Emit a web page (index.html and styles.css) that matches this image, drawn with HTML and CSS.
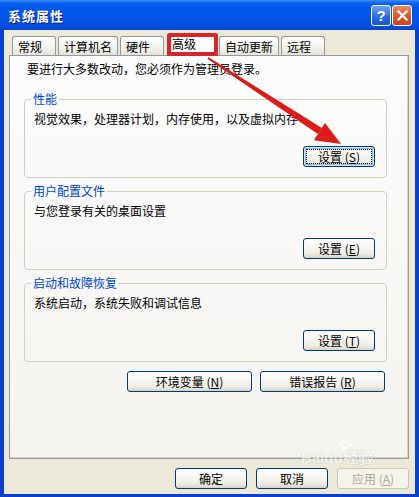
FILE: index.html
```html
<!DOCTYPE html>
<html lang="zh-CN">
<head>
  <meta charset="UTF-8">
  <title>系统属性</title>
  <link rel="stylesheet" href="styles.css">
</head>
<body>
  <div class="window">
    <div class="titlebar">
      <span class="title">系统属性</span>
      <div class="caption-btns">
        <span class="cap-btn help">?</span>
        <span class="cap-btn close">
          <svg width="11" height="11" viewBox="0 0 11 11"><path d="M1.5 1.5 L9.5 9.5 M9.5 1.5 L1.5 9.5" stroke="#fff" stroke-width="2.2" stroke-linecap="square"/></svg>
        </span>
      </div>
    </div>

    <div class="client">
      <div class="tabs">
        <span class="tab">常规</span>
        <span class="tab">计算机名</span>
        <span class="tab">硬件</span>
        <span class="tab active">高级</span>
        <span class="tab">自动更新</span>
        <span class="tab">远程</span>
      </div>

      <div class="panel">
        <p class="intro">要进行大多数改动，您必须作为管理员登录。</p>

        <fieldset class="group">
          <legend>性能</legend>
          <p>视觉效果，处理器计划，内存使用，以及虚拟内存</p>
          <div class="actions"><button class="btn focus">设置 (<u>S</u>)</button></div>
        </fieldset>

        <fieldset class="group">
          <legend>用户配置文件</legend>
          <p>与您登录有关的桌面设置</p>
          <div class="actions"><button class="btn">设置 (<u>E</u>)</button></div>
        </fieldset>

        <fieldset class="group">
          <legend>启动和故障恢复</legend>
          <p>系统启动，系统失败和调试信息</p>
          <div class="actions"><button class="btn">设置 (<u>T</u>)</button></div>
        </fieldset>

        <div class="panel-actions">
          <button class="btn wide">环境变量 (<u>N</u>)</button>
          <button class="btn wide">错误报告 (<u>R</u>)</button>
        </div>
      </div>

      <div class="dialog-actions">
        <button class="btn">确定</button>
        <button class="btn">取消</button>
        <button class="btn" disabled>应用 (<u>A</u>)</button>
      </div>
    </div>

    <!-- annotation arrow drawn over the dialog -->
    <svg class="arrow" width="419" height="497" viewBox="0 0 419 497">
      <polygon points="207.4,58.8 208.6,57.2 321.9,128.0 317.9,134.0" fill="#dc1b1b"/>
      <polygon points="313.8,140.3 325.0,122.9 341,144" fill="#dc1b1b"/>
    </svg>

    <div class="watermark">
      <svg class="paw" width="16" height="14" viewBox="0 0 16 14">
        <circle cx="3" cy="6" r="2" fill="#fff"/>
        <circle cx="6" cy="2.5" r="2" fill="#fff"/>
        <circle cx="10" cy="2.5" r="2" fill="#fff"/>
        <circle cx="13" cy="6" r="2" fill="#fff"/>
        <ellipse cx="8" cy="10" rx="3.5" ry="3" fill="#fff"/>
      </svg>
      <span>Baidu经验</span>
    </div>
  </div>
</body>
</html>
```

FILE: styles.css
```css
body {
  margin: 0;
  font-family: "Noto Sans CJK SC", "Liberation Sans", sans-serif;
  font-size: 12px;
  color: #000;
}
.window {
  position: relative;
  width: 419px;
  height: 497px;
  display: flex;
  flex-direction: column;
  background: #0b3fcf;
  overflow: hidden;
}
.titlebar {
  height: 30px;
  display: flex;
  align-items: center;
  padding: 0 7px 0 8px;
  background: linear-gradient(#3d8ef9 0, #0a63f0 3px, #0058ee 7px, #0355ea 55%, #0450e2 85%, #0a45cf 100%);
}
.title {
  flex: 1;
  color: #fff;
  font-weight: bold;
  font-size: 13px;
  letter-spacing: 1px;
  text-shadow: 1px 1px 0 #0c2388;
}
.caption-btns {
  display: flex;
  gap: 1px;
  margin-top: 1px;
}
.cap-btn {
  box-sizing: border-box;
  width: 20px;
  height: 21px;
  border: 1px solid #fff;
  border-radius: 3px;
  display: flex;
  align-items: center;
  justify-content: center;
  color: #fff;
  font: bold 15px "Liberation Sans", sans-serif;
}
.help {
  background: linear-gradient(#6aa5fd, #2a66e3 60%, #1c55d4);
}
.close {
  background: linear-gradient(#eb8a66, #d9542a 60%, #c9431b);
}
.client {
  flex: 1;
  margin: 0 4px 3px;
  padding: 3px 6px 5px 5px;
  background: #ece9d8;
  display: flex;
  flex-direction: column;
}
.tabs {
  position: relative;
  z-index: 1;
  height: 22px;
  display: flex;
  align-items: flex-end;
  gap: 2px;
  padding-left: 3px;
}
.tab {
  box-sizing: border-box;
  height: 19px;
  min-width: 44px;
  padding: 2px 5px 0;
  border: 1px solid #919b9c;
  border-bottom: none;
  border-radius: 3px 3px 0 0;
  background: linear-gradient(#fff, #f3f2ed 60%, #e5e3da);
  line-height: 15px;
  white-space: nowrap;
}
.tab.active {
  width: 51px;
  height: 23px;
  margin: 0 -1px -1px 1px;
  padding: 2px 5px 0 4px;
  background: #fcfcfe;
  outline: 4px solid #d6262b;
  outline-offset: -4px;
}
.panel {
  flex: 1;
  box-sizing: border-box;
  border: 1px solid #919b9c;
  box-shadow: inset -1px -1px 0 #d6d3c6;
  background: linear-gradient(#fcfcfe, #f4f3ee);
  padding: 6px 21px 0 14px;
}
.intro {
  margin: 0 0 16px 3px;
  line-height: 14px;
}
.group {
  margin: 0 0 6px;
  padding: 6px 11px 10px 9px;
  border: 1px solid #d0d0bf;
  border-radius: 4px;
  min-width: 0;
}
.group legend {
  margin-left: -3px;
  padding: 0 2px;
  color: #0046d5;
  line-height: 14px;
}
.group p {
  margin: 0;
  line-height: 14px;
  white-space: nowrap;
}
.actions {
  display: flex;
  justify-content: flex-end;
  margin-top: 20px;
}
.btn {
  box-sizing: border-box;
  width: 72px;
  height: 21px;
  padding: 0;
  border: 1px solid #003c74;
  border-radius: 3px;
  background: linear-gradient(#ffffff 0, #f6f5f1 45%, #ecebe4 80%, #d8d2c6 100%);
  font-family: "Noto Sans CJK SC", "Liberation Sans", sans-serif;
  font-size: 12px;
  line-height: 19px;
  color: #000;
}
.btn u {
  text-underline-offset: 1px;
}
.btn.focus {
  box-shadow: inset 0 0 0 1px #cee7ff, inset 0 0 0 2px #98b8ea;
  outline: 1px dotted #000;
  outline-offset: -4px;
}
.btn.wide {
  width: 125px;
}
.btn:disabled {
  border-color: #c9c7ba;
  background: #f5f4ea;
  color: #aca899;
}
.panel-actions {
  display: flex;
  justify-content: flex-end;
  gap: 8px;
  margin-top: 9px;
  padding-right: 2px;
}
.dialog-actions {
  display: flex;
  justify-content: flex-end;
  gap: 9px;
  margin-top: 9px;
}
.arrow {
  position: absolute;
  left: 0;
  top: 0;
  pointer-events: none;
}
.watermark {
  position: absolute;
  left: 301px;
  top: 439px;
  display: flex;
  flex-direction: column;
  align-items: flex-start;
  opacity: 0.6;
  pointer-events: none;
}
.watermark .paw {
  margin-left: 36px;
}
.watermark span {
  margin-top: -4px;
  color: #fff;
  font: bold 15px/18px "Liberation Sans", sans-serif;
  text-shadow: 0 0 1px #8a8a8a;
}
```
